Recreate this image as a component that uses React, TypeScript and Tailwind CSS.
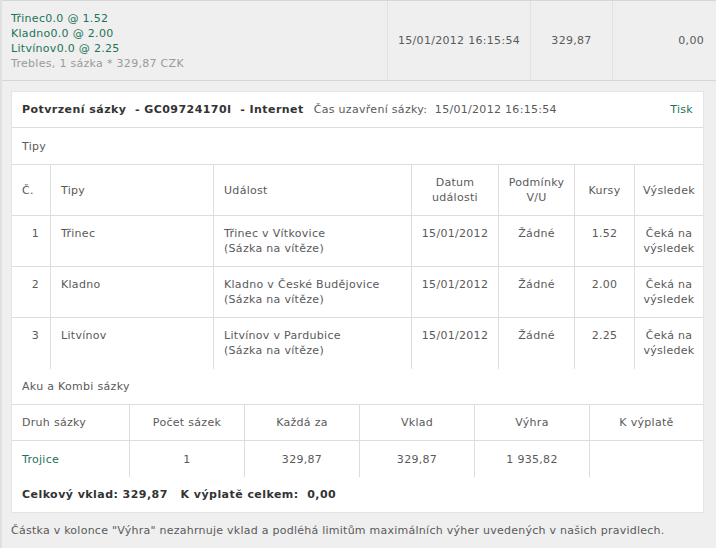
const tips = [
  { n: '1', tip: 'Třinec', event: 'Třinec v Vítkovice', odds: '1.52' },
  { n: '2', tip: 'Kladno', event: 'Kladno v České Budějovice', odds: '2.00' },
  { n: '3', tip: 'Litvínov', event: 'Litvínov v Pardubice', odds: '2.25' },
];

export default function App() {
  return (
    <div className="min-h-[548px] bg-[#efefef] border-l-2 border-[#e0e0e0] font-['DejaVu_Sans',Verdana,sans-serif] text-[11px] leading-[15px] tracking-[0.3px] text-[#5a5a5a]">
      {/* bet summary row */}
      <div className="grid grid-cols-[385px_143px_82px_1fr] h-[81px] border-t border-b border-[#d6d6d6]">
        <div className="pl-[9px] pt-[10px]">
          <div className="text-[#1d7358]">Třinec0.0 @ 1.52</div>
          <div className="text-[#1d7358]">Kladno0.0 @ 2.00</div>
          <div className="text-[#1d7358]">Litvínov0.0 @ 2.25</div>
          <div className="text-[#9a9a9a]">Trebles, 1 sázka * 329,87 CZK</div>
        </div>
        <div className="flex items-center justify-center border-l border-[#e2e2e2]">15/01/2012 16:15:54</div>
        <div className="flex items-center justify-center border-l border-[#e2e2e2]">329,87</div>
        <div className="flex items-center justify-end pr-[12px] border-l border-[#e2e2e2]">0,00</div>
      </div>

      {/* confirmation panel */}
      <div className="ml-[9px] mr-[12px] mt-[10px] bg-white border border-[#e4e4e4]">
        <div className="flex items-center h-[36px] px-[10px] border-b border-[#dddddd]">
          <span className="font-bold tracking-[0.45px] text-[#333]">Potvrzení sázky &nbsp;- GC09724170I &nbsp;- Internet</span>
          <span className="ml-[10px]">Čas uzavření sázky: &nbsp;15/01/2012 16:15:54</span>
          <span className="ml-auto text-[#1d7358]">Tisk</span>
        </div>
        <div className="flex items-center h-[36px] px-[10px]">Tipy</div>

        <div className="grid grid-cols-[38px_163px_198px_87px_76px_60px_1fr] border-t border-[#dddddd]">
          <div className="flex items-center h-[51px] px-[10px] border-b border-[#dddddd]">Č.</div>
          <div className="flex items-center px-[10px] border-l border-b border-[#dddddd]">Tipy</div>
          <div className="flex items-center px-[10px] border-l border-b border-[#dddddd]">Událost</div>
          <div className="flex items-center justify-center text-center border-l border-b border-[#dddddd]">Datum<br />události</div>
          <div className="flex items-center justify-center text-center border-l border-b border-[#dddddd]">Podmínky<br />V/U</div>
          <div className="flex items-center justify-center border-l border-b border-[#dddddd]">Kursy</div>
          <div className="flex items-center justify-center border-l border-b border-[#dddddd]">Výsledek</div>
          {tips.map((t, i) => {
            const b = i < tips.length - 1 ? 'border-b' : '';
            return [
              <div key={t.n + 'a'} className={`h-[51px] pt-[10px] pr-[11px] text-right border-[#dddddd] ${b}`}>{t.n}</div>,
              <div key={t.n + 'b'} className={`pt-[10px] px-[10px] border-l border-[#dddddd] ${b}`}>{t.tip}</div>,
              <div key={t.n + 'c'} className={`pt-[10px] px-[10px] border-l border-[#dddddd] ${b}`}>
                {t.event}
                <br />
                (Sázka na vítěze)
              </div>,
              <div key={t.n + 'd'} className={`pt-[10px] text-center border-l border-[#dddddd] ${b}`}>15/01/2012</div>,
              <div key={t.n + 'e'} className={`pt-[10px] text-center border-l border-[#dddddd] ${b}`}>Žádné</div>,
              <div key={t.n + 'f'} className={`pt-[10px] text-center border-l border-[#dddddd] ${b}`}>{t.odds}</div>,
              <div key={t.n + 'g'} className={`pt-[10px] text-center border-l border-[#dddddd] ${b}`}>
                Čeká na
                <br />
                výsledek
              </div>,
            ];
          })}
        </div>

        <div className="flex items-center h-[35px] px-[10px]">Aku a Kombi sázky</div>

        <div className="grid grid-cols-[117px_115px_115px_115px_115px_1fr] border-t border-[#dddddd]">
          <div className="flex items-center h-[36px] px-[10px] border-b border-[#dddddd]">Druh sázky</div>
          <div className="flex items-center justify-center border-l border-b border-[#dddddd]">Počet sázek</div>
          <div className="flex items-center justify-center border-l border-b border-[#dddddd]">Každá za</div>
          <div className="flex items-center justify-center border-l border-b border-[#dddddd]">Vklad</div>
          <div className="flex items-center justify-center border-l border-b border-[#dddddd]">Výhra</div>
          <div className="flex items-center justify-center border-l border-b border-[#dddddd]">K výplatě</div>

          <div className="flex items-center h-[36px] px-[10px] text-[#1d7358]">Trojice</div>
          <div className="flex items-center justify-center border-l border-[#dddddd]">1</div>
          <div className="flex items-center justify-center border-l border-[#dddddd]">329,87</div>
          <div className="flex items-center justify-center border-l border-[#dddddd]">329,87</div>
          <div className="flex items-center justify-center border-l border-[#dddddd]">1 935,82</div>
          <div className="border-l border-[#dddddd]"></div>
        </div>

        <div className="flex items-center h-[35px] px-[10px] font-bold tracking-[0.45px] text-[#333]">
          Celkový vklad: 329,87 &nbsp; K výplatě celkem: &nbsp;0,00
        </div>
      </div>

      <div className="flex items-center h-[35px] pl-[9px] tracking-[0.25px]">
        Částka v kolonce "Výhra" nezahrnuje vklad a podléhá limitům maximálních výher uvedených v našich pravidlech.
      </div>
    </div>
  );
}
